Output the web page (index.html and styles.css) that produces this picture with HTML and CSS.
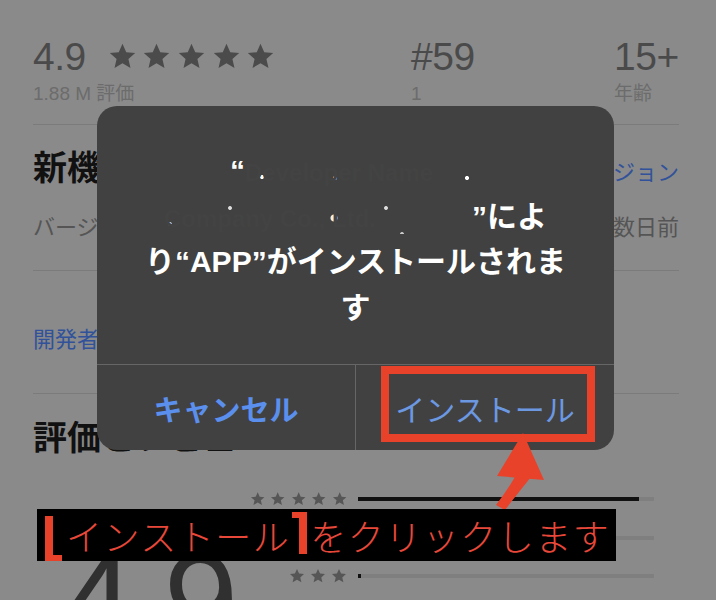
FILE: index.html
```html
<!DOCTYPE html>
<html lang="ja">
<head>
<meta charset="utf-8">
<title>インストール</title>
<link rel="stylesheet" href="styles.css">
</head>
<body>
<svg class="defs" width="0" height="0" aria-hidden="true">
  <symbol id="star" viewBox="0 0 24 24"><path d="M12 1.5l3.1 6.9 7.4.7-5.6 5 1.7 7.4L12 17.6l-6.6 3.9 1.7-7.4-5.6-5 7.4-.7z"/></symbol>
</svg>

<main class="page">
  <section class="stats">
    <div class="stat stat-rating">
      <div class="rating-top">
        <span class="num">4.9</span>
        <span class="stars-lg">
          <svg><use href="#star"/></svg><svg><use href="#star"/></svg><svg><use href="#star"/></svg><svg><use href="#star"/></svg><svg><use href="#star"/></svg>
        </span>
      </div>
      <div class="sub">1.88 M 評価</div>
    </div>
    <div class="stat stat-rank">
      <div class="num">#59</div>
      <div class="sub">1</div>
    </div>
    <div class="stat stat-age">
      <div class="num">15+</div>
      <div class="sub">年齢</div>
    </div>
  </section>

  <div class="rule rule-1"></div>

  <section class="whatsnew">
    <div class="head-row">
      <h2 class="title">新機能</h2>
      <span class="link">バージョン</span>
    </div>
    <div class="meta-row">
      <span class="meta">バージョン 15.2.1</span>
      <span class="meta">数日前</span>
    </div>
  </section>

  <div class="rule rule-2"></div>

  <section class="dev">
    <span class="link dev-link">開発者の他のApp</span>
  </section>

  <div class="rule rule-3"></div>

  <section class="reviews">
    <h2 class="title reviews-title">評価とレビュー</h2>
    <div class="ratings">
      <div class="big-num">4.9</div>
      <div class="bars">
        <div class="bar-row">
          <span class="stars-sm"><svg><use href="#star"/></svg><svg><use href="#star"/></svg><svg><use href="#star"/></svg><svg><use href="#star"/></svg><svg><use href="#star"/></svg></span>
          <span class="track"><span class="fill" style="width:95%"></span></span>
        </div>
        <div class="bar-row">
          <span class="stars-sm"><svg><use href="#star"/></svg><svg><use href="#star"/></svg><svg><use href="#star"/></svg><svg><use href="#star"/></svg></span>
          <span class="track"><span class="fill" style="width:3%"></span></span>
        </div>
        <div class="bar-row">
          <span class="stars-sm"><svg><use href="#star"/></svg><svg><use href="#star"/></svg><svg><use href="#star"/></svg></span>
          <span class="track"><span class="fill" style="width:1%"></span></span>
        </div>
        <div class="bar-row">
          <span class="stars-sm"><svg><use href="#star"/></svg><svg><use href="#star"/></svg></span>
          <span class="track"><span class="fill" style="width:0.5%"></span></span>
        </div>
      </div>
    </div>
  </section>
</main>

<div class="dialog" role="dialog">
  <p class="dialog-title">“<span class="redact redact-1">Developer Name</span><br><span class="redact redact-2">Company Co., Ltd.</span>”によ<br>り“APP”がインストールされま<br>す</p>
  <div class="dialog-buttons">
    <button class="dbtn dbtn-cancel">キャンセル</button>
    <button class="dbtn dbtn-install">インストール</button>
  </div>
  <div class="highlight"></div>
</div>

<svg class="arrow" width="80" height="90" viewBox="0 0 80 90" aria-hidden="true">
  <polygon points="43,8 17,51 64,55" fill="#e8432a"/>
  <path d="M36 50 L51 52 Q38 68 25 85 L16 80 Q27 66 36 50 Z" fill="#e8432a"/>
</svg>

<div class="caption">
  <span class="br br-left"></span><span class="cap-text">インストール</span><span class="br br-right"></span><span class="cap-text">をクリックします</span>
</div>
</body>
</html>
```

FILE: styles.css
```css
* { box-sizing: border-box; }

html, body {
  margin: 0;
  padding: 0;
}

body {
  width: 716px;
  height: 600px;
  overflow: hidden;
  position: relative;
  background: #8a8a8a;
  font-family: "Liberation Sans", "Noto Sans CJK JP", sans-serif;
  color: #111;
}

.defs { position: absolute; }

.page {
  padding: 37px 37px 0 33px;
}

/* top stats */
.stats {
  display: flex;
}
.stat-rating { width: 378px; }
.stat-rank { width: 203px; }

.num {
  font-size: 39px;
  line-height: 39px;
  color: #4a4a4a;
  letter-spacing: -0.5px;
}
.rating-top {
  display: flex;
  align-items: center;
  gap: 22px;
}
.stars-lg {
  display: flex;
  gap: 5.6px;
  fill: #4b4b4b;
}
.stars-lg svg { width: 29px; height: 29px; }

.sub {
  margin-top: 8px;
  font-size: 19px;
  line-height: 19px;
  color: #6c6c6c;
}

.rule {
  height: 1px;
  background: #7b7b7b;
}
.rule-1 { margin-top: 21px; }

/* sections */
.title {
  margin: 0;
  font-family: "Noto Sans CJK JP", sans-serif;
  font-weight: 700;
  font-size: 34px;
  line-height: 34px;
  color: #111;
}
.link {
  font-family: "Noto Sans CJK JP", sans-serif;
  font-size: 22px;
  line-height: 22px;
  color: #31529a;
}
.whatsnew {
  padding-top: 24px;
  padding-bottom: 34px;
}
.head-row {
  display: flex;
  justify-content: space-between;
  align-items: baseline;
}
.meta-row {
  display: flex;
  justify-content: space-between;
  margin-top: 31px;
}
.meta {
  font-family: "Noto Sans CJK JP", sans-serif;
  font-size: 22px;
  line-height: 22px;
  color: #555;
}

.dev {
  padding: 55px 0 42px;
}

.reviews {
  padding-top: 25px;
}
.reviews-title { line-height: 34px; }

.ratings {
  display: flex;
  margin-top: 27px;
}
.big-num {
  font-family: "Liberation Sans", sans-serif;
  font-size: 134px;
  line-height: 134px;
  letter-spacing: -4px;
  color: #303030;
  margin-left: 27px;
  margin-top: 54px;
}
.bars {
  margin-left: auto;
  margin-right: 25px;
  display: flex;
  flex-direction: column;
}
.bar-row {
  display: flex;
  align-items: center;
  height: 38.5px;
}
.stars-sm {
  width: 97px;
  display: flex;
  justify-content: flex-end;
  gap: 5px;
  fill: #565656;
}
.stars-sm svg { width: 16px; height: 16px; }
.track {
  margin-left: 11px;
  width: 296px;
  height: 4px;
  background: #7f7f7f;
  display: block;
}
.fill {
  display: block;
  height: 100%;
  background: #111;
}

/* dialog overlay */
.dialog {
  position: absolute;
  left: 97px;
  top: 106px;
  width: 517px;
  height: 344px;
  background: #414141;
  border-radius: 20px;
  display: flex;
  flex-direction: column;
}
.dialog-title {
  margin: 0;
  padding: 42px 20px 0;
  height: 258px;
  text-align: center;
  font-family: "Liberation Sans", "Noto Sans CJK JP", sans-serif;
  font-weight: 700;
  font-size: 30px;
  line-height: 45.5px;
  color: #fff;
}
.redact {
  display: inline-block;
  color: #434343;
  font-size: 24px;
  line-height: 30px;
  vertical-align: middle;
  overflow: hidden;
  white-space: nowrap;
  text-align: left;
}
.redact-1 {
  width: 236px;
  background:
    radial-gradient(circle at 17px 19px, #fff 1.6px, transparent 2.4px),
    radial-gradient(circle at 90px 20px, #ddd 1.6px, transparent 2.4px),
    radial-gradient(circle at 222px 20px, #fff 1.6px, transparent 2.4px);
}
.redact-2 {
  width: 308px;
  background:
    radial-gradient(circle at 6px 20px, #ccc 1.5px, transparent 2.3px),
    radial-gradient(circle at 66px 4px, #ddd 1.5px, transparent 2.3px),
    radial-gradient(circle at 170px 14px, #eee 3px, transparent 4px),
    radial-gradient(circle at 222px 4px, #ddd 1.5px, transparent 2.3px),
    radial-gradient(circle at 238px 30px, #ccc 1.5px, transparent 2.3px);
}

.dialog-buttons {
  display: flex;
  height: 86px;
  border-top: 1px solid #666;
}
.dbtn {
  flex: 1;
  border: 0;
  background: transparent;
  font-family: "Noto Sans CJK JP", sans-serif;
  font-size: 30px;
  padding: 0;
  margin: 0;
}
.dbtn-cancel {
  border-right: 1px solid #666;
  font-weight: 700;
  font-size: 29px;
  color: #5b8fed;
}
.dbtn-install {
  font-weight: 400;
  color: #6c98e2;
}

.highlight {
  position: absolute;
  left: 284px;
  top: 260px;
  width: 214px;
  height: 76px;
  border: 8px solid #e8432a;
}

.arrow {
  position: absolute;
  left: 480px;
  top: 425px;
}

/* caption annotation */
.caption {
  position: absolute;
  left: 37px;
  top: 509px;
  width: 579px;
  height: 52px;
  background: #000;
  display: flex;
  align-items: center;
  padding-left: 8px;
  color: #e8483a;
  font-family: "Noto Sans CJK JP", sans-serif;
  font-weight: 300;
  font-size: 36px;
  line-height: 52px;
}
.cap-text {
  letter-spacing: 1.5px;
}
.br {
  display: block;
  border-color: #e8432a;
  border-style: solid;
  border-width: 0;
}
.br-left {
  width: 17px;
  height: 45px;
  border-left-width: 8px;
  border-bottom-width: 6px;
  margin-top: 7px;
  margin-right: 4px;
}
.br-right {
  width: 15px;
  height: 42px;
  border-right-width: 8px;
  border-top-width: 6px;
  margin-top: -4px;
  margin-left: 2px;
  margin-right: 3px;
}
```
